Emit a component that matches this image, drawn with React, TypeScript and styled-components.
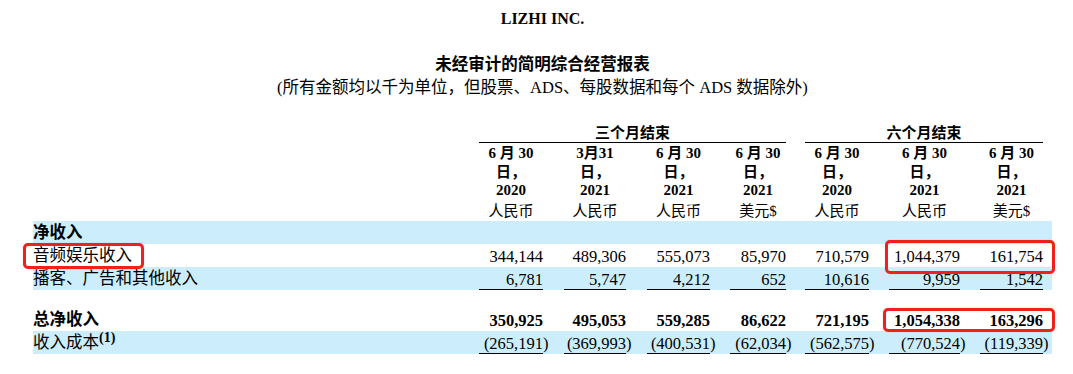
import React from 'react';
import styled, { createGlobalStyle } from 'styled-components';

const SERIF = `"Liberation Serif", "Noto Sans CJK SC", serif`;
const CJK = `"Noto Sans CJK SC", sans-serif`;

const GlobalStyle = createGlobalStyle`
  body {
    margin: 0;
    background: #fff;
    color: #000;
    font-family: ${SERIF};
  }
`;

const Page = styled.div`
  position: relative;
  width: 1019px;
  margin-left: 33px;
  padding-top: 9px;
`;

const Company = styled.div`
  font: bold 16px/20px ${SERIF};
  text-align: center;
`;

const Title = styled.div`
  margin-top: 21.5px;
  font: bold 16.5px/24px ${CJK};
  text-align: center;
`;

const Subtitle = styled.div`
  margin-top: 1px;
  font: 16.5px/24px ${SERIF};
  text-align: center;
`;

const Table = styled.table`
  margin-top: 24px;
  width: 1019px;
  table-layout: fixed;
  border-collapse: separate;
  border-spacing: 0;
`;

const GroupHead = styled.td`
  padding: 0 0 3px;
  font: bold 15px/16px ${CJK};
  text-align: center;
  vertical-align: bottom;
  /* the rule under the period title */
  box-shadow: inset 0 -1px 0 #000;
`;

const DateHead = styled.td`
  padding: 1.5px 0 0;
  text-align: center;
  vertical-align: bottom;
`;

const DateLine = styled.div`
  font: bold 15px/18.5px ${SERIF};
  white-space: nowrap;
`;

const Currency = styled.div`
  margin-top: 2.5px;
  font: 15px/18.5px ${SERIF};
  white-space: nowrap;
`;

type RowProps = { $shade?: boolean };

const Row = styled.tr<RowProps>`
  background: ${({ $shade }) => ($shade ? '#cceefc' : 'transparent')};
`;

const Spacer = styled.tr`
  height: 18px;
`;

type CellProps = { $bold?: boolean };

const Label = styled.td<CellProps>`
  padding: 0 0 2px;
  font: ${({ $bold }) => ($bold ? 'bold' : 'normal')} 16.5px/21px ${CJK};
  white-space: nowrap;
  vertical-align: top;
`;

const Note = styled.sup`
  font: bold 14px ${SERIF};
  line-height: 0;
  vertical-align: 6px;
`;

type NumProps = { $bold?: boolean; $rule?: boolean };

const Num = styled.td<NumProps>`
  padding: 2px 0 0;
  font: ${({ $bold }) => ($bold ? 'bold' : 'normal')} 16.5px/21px ${SERIF};
  text-align: right;
  white-space: nowrap;
  vertical-align: top;
  box-shadow: ${({ $rule }) => ($rule ? 'inset 0 -1px 0 #000' : 'none')};
`;

// the closing bracket of a negative figure sits past the column edge
const Hang = styled.span`
  margin-right: -5.5px;
`;

const Gap = styled.td`
  padding: 0;
`;

type MarkerProps = { $top: number; $left: number; $w: number; $h: number };

const Marker = styled.div<MarkerProps>`
  position: absolute;
  top: ${({ $top }) => $top}px;
  left: ${({ $left }) => $left}px;
  width: ${({ $w }) => $w}px;
  height: ${({ $h }) => $h}px;
  box-sizing: border-box;
  border: 3px solid #f0211a;
  border-radius: 5px;
  box-shadow: 0 0 1px rgba(240, 33, 26, 0.5);
  pointer-events: none;
`;

const colWidths = [446, 64, 21, 62, 21, 63, 20, 56, 19, 64, 20, 71, 20, 63, 9];

type Period = { day: string; year: string; cur: string };

const periods: Period[] = [
  { day: '6 月 30', year: '2020', cur: '人民币' },
  { day: '3月31', year: '2021', cur: '人民币' },
  { day: '6 月 30', year: '2021', cur: '人民币' },
  { day: '6 月 30', year: '2021', cur: '美元$' },
  { day: '6 月 30', year: '2020', cur: '人民币' },
  { day: '6 月 30', year: '2021', cur: '人民币' },
  { day: '6 月 30', year: '2021', cur: '美元$' },
];

type Line = {
  label: string;
  values: string[];
  shade?: boolean;
  bold?: boolean;
  rule?: boolean;
  note?: string;
};

const revenue: Line[] = [
  {
    label: '音频娱乐收入',
    values: ['344,144', '489,306', '555,073', '85,970', '710,579', '1,044,379', '161,754'],
  },
  {
    label: '播客、广告和其他收入',
    values: ['6,781', '5,747', '4,212', '652', '10,616', '9,959', '1,542'],
    shade: true,
    rule: true,
  },
];

const totals: Line[] = [
  {
    label: '总净收入',
    values: ['350,925', '495,053', '559,285', '86,622', '721,195', '1,054,338', '163,296'],
    bold: true,
  },
  {
    label: '收入成本',
    note: '(1)',
    values: ['(265,191)', '(369,993)', '(400,531)', '(62,034)', '(562,575)', '(770,524)', '(119,339)'],
    shade: true,
    rule: true,
  },
];

const Figure = ({ value }: { value: string }) =>
  value.endsWith(')') ? (
    <>
      {value.slice(0, -1)}
      <Hang>)</Hang>
    </>
  ) : (
    <>{value}</>
  );

const DataRow = ({ line }: { line: Line }) => (
  <Row $shade={line.shade}>
    <Label $bold={line.bold}>
      {line.label}
      {line.note && <Note>{line.note}</Note>}
    </Label>
    {line.values.map((v, i) => (
      <React.Fragment key={i}>
        <Num $bold={line.bold} $rule={line.rule}>
          <Figure value={v} />
        </Num>
        <Gap />
      </React.Fragment>
    ))}
  </Row>
);

const App = () => (
  <Page>
    <GlobalStyle />
    <Company>LIZHI INC.</Company>
    <Title>未经审计的简明综合经营报表</Title>
    <Subtitle>(所有金额均以千为单位，但股票、ADS、每股数据和每个 ADS 数据除外)</Subtitle>

    <Table>
      <colgroup>
        {colWidths.map((w, i) => (
          <col key={i} style={{ width: w }} />
        ))}
      </colgroup>
      <tbody>
        <tr>
          <Gap />
          <GroupHead colSpan={7}>三个月结束</GroupHead>
          <Gap />
          <GroupHead colSpan={5}>六个月结束</GroupHead>
          <Gap />
        </tr>
        <tr>
          <Gap />
          {periods.map((p, i) => (
            <React.Fragment key={i}>
              <DateHead>
                <DateLine>{p.day}</DateLine>
                <DateLine>日，</DateLine>
                <DateLine>{p.year}</DateLine>
                <Currency>{p.cur}</Currency>
              </DateHead>
              <Gap />
            </React.Fragment>
          ))}
        </tr>
        <Row $shade>
          <Label $bold>净收入</Label>
          <Gap colSpan={14} />
        </Row>
        {revenue.map((line) => (
          <DataRow key={line.label} line={line} />
        ))}
        <Spacer>
          <Gap colSpan={15} />
        </Spacer>
        {totals.map((line) => (
          <DataRow key={line.label} line={line} />
        ))}
      </tbody>
    </Table>

    <Marker $top={242.7} $left={-10.3} $w={121.6} $h={26.3} />
    <Marker $top={240.2} $left={852} $w={169.5} $h={33.5} />
    <Marker $top={308.3} $left={849.7} $w={172} $h={23.5} />
  </Page>
);

export default App;
